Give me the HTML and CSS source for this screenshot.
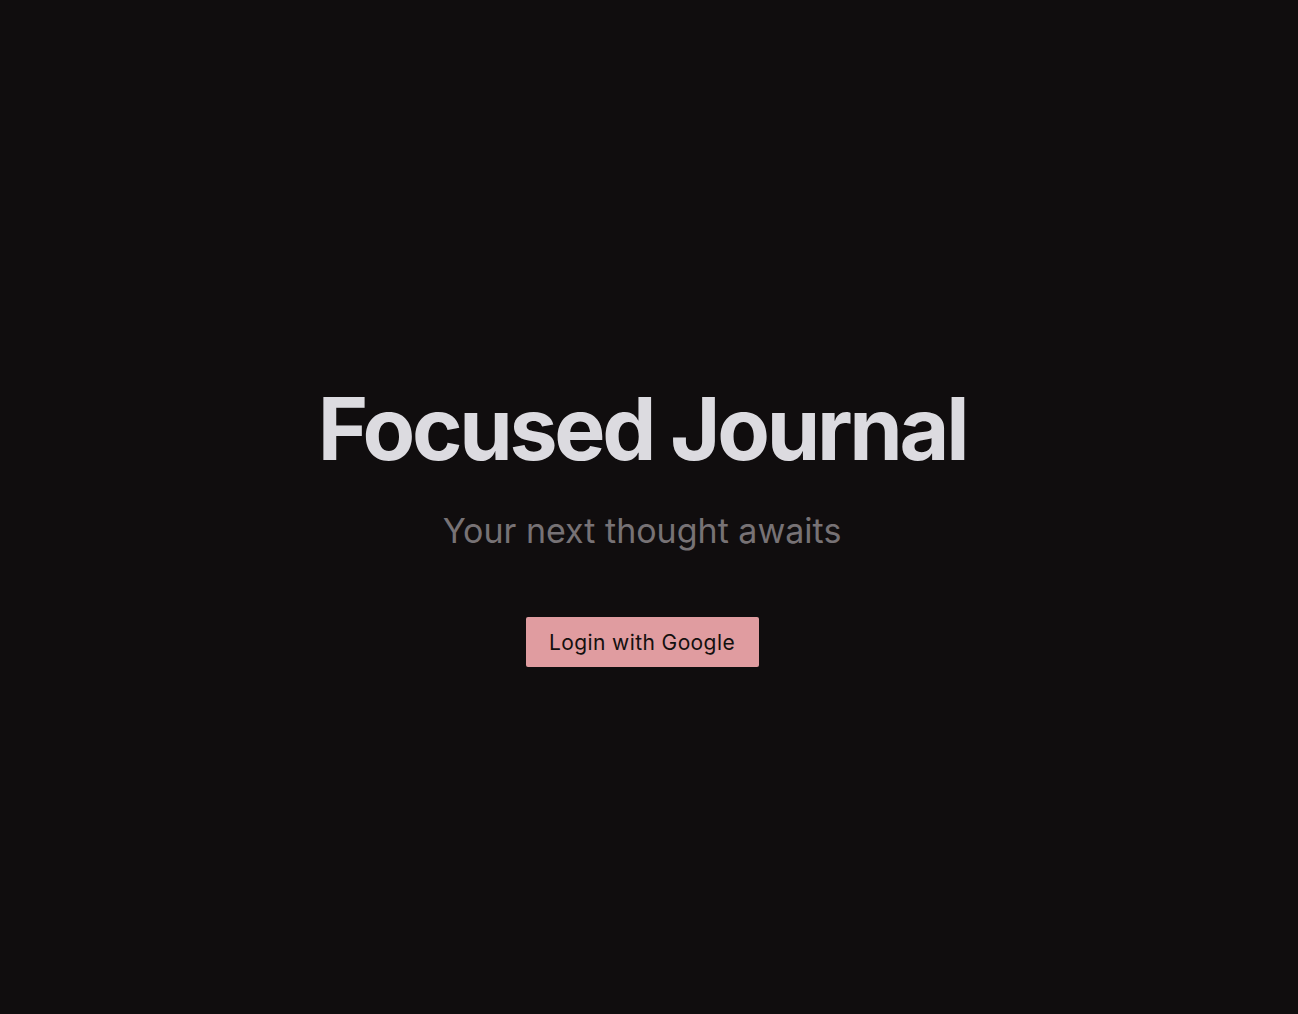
FILE: index.html
```html
<!DOCTYPE html>
<html lang="en">
<head>
<meta charset="utf-8">
<title>Focused Journal</title>
<link rel="stylesheet" href="styles.css">
</head>
<body>
<main class="landing">
  <h1 class="title">Focused Journal</h1>
  <p class="subtitle">Your next thought awaits</p>
  <button class="login">Login with Google</button>
</main>
</body>
</html>
```
FILE: styles.css
```css
html, body {
  margin: 0;
  padding: 0;
  height: 100%;
  background: #100d0e;
}
body {
  font-family: Inter, "Noto Sans", sans-serif;
}
.landing {
  min-height: 100vh;
  display: flex;
  flex-direction: column;
  align-items: center;
  justify-content: center;
  box-sizing: border-box;
  padding-top: 35px;
  padding-right: 14px;
}
.title {
  margin: 0;
  font-size: 86px;
  font-weight: 700;
  letter-spacing: -3.3px;
  line-height: 1.1;
  color: #dcdbe0;
}
.subtitle {
  margin: 35px 0 0;
  font-size: 34px;
  font-weight: 400;
  line-height: 1.2;
  color: #777275;
}
.login {
  margin-top: 65px;
  width: 233px;
  height: 50px;
  border: none;
  border-radius: 2px;
  background: #e09ca0;
  color: #14100f;
  font-family: Inter, "Noto Sans", sans-serif;
  font-size: 21px;
  font-weight: 400;
  letter-spacing: 0.4px;
  cursor: pointer;
}
```
